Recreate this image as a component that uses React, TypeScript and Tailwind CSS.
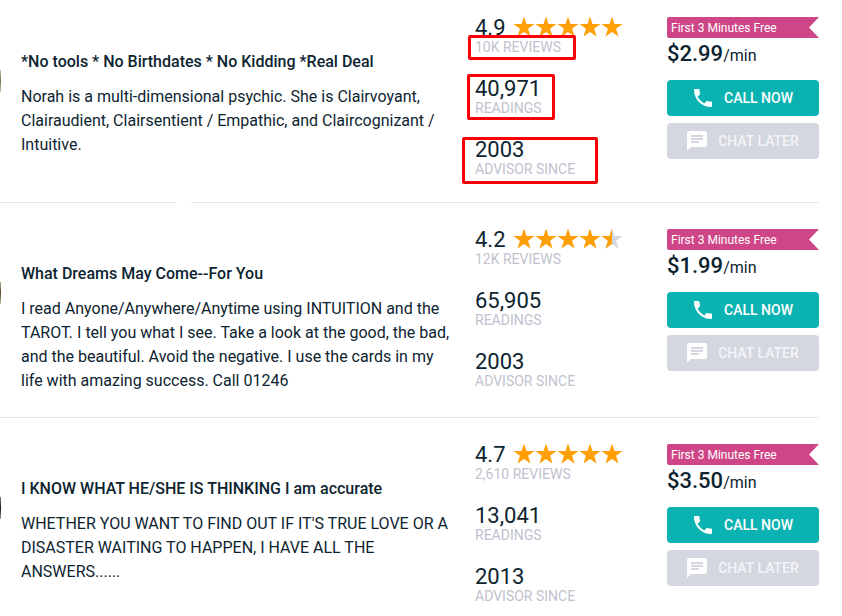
import { clsx } from "clsx";
import { MdChat } from "react-icons/md";

interface Advisor {
  id: number;
  title: string;
  bio: string;
  rating: string;
  stars: number;
  reviews: string;
  readings: string;
  since: string;
  price: string;
  avatar: string;
  marked?: boolean;
}

const advisors: Advisor[] = [
  {
    id: 1,
    title: "*No tools * No Birthdates * No Kidding *Real Deal",
    bio: "Norah is a multi-dimensional psychic. She is Clairvoyant, Clairaudient, Clairsentient / Empathic, and Claircognizant / Intuitive.",
    rating: "4.9",
    stars: 5,
    reviews: "10K REVIEWS",
    readings: "40,971",
    since: "2003",
    price: "$2.99",
    avatar: "from-[#c4c9a8] via-[#6d7a45] to-[#c4c9a8]",
    marked: true,
  },
  {
    id: 2,
    title: "What Dreams May Come--For You",
    bio: "I read Anyone/Anywhere/Anytime using INTUITION and the TAROT. I tell you what I see. Take a look at the good, the bad, and the beautiful. Avoid the negative. I use the cards in my life with amazing success. Call 01246",
    rating: "4.2",
    stars: 4.5,
    reviews: "12K REVIEWS",
    readings: "65,905",
    since: "2003",
    price: "$1.99",
    avatar: "from-[#b9aa92] via-[#5a4636] to-[#c9c4a8]",
  },
  {
    id: 3,
    title: "I KNOW WHAT HE/SHE IS THINKING I am accurate",
    bio: "WHETHER YOU WANT TO FIND OUT IF IT'S TRUE LOVE OR A DISASTER WAITING TO HAPPEN, I HAVE ALL THE ANSWERS......",
    rating: "4.7",
    stars: 5,
    reviews: "2,610 REVIEWS",
    readings: "13,041",
    since: "2013",
    price: "$3.50",
    avatar: "from-[#8a8080] via-[#1c1418] to-[#a89a94]",
  },
];

const Star = ({ fill }: { fill: number }) => (
  <svg viewBox="0 0 22 22" className="size-[22px]" aria-hidden="true">
    <path
      d="M11 .5 13.5 8H21.5L15.1 12.8 17.5 20.6 11 15.9 4.5 20.6 6.9 12.8.5 8H8.5z"
      fill={fill === 1 ? "#ff9f06" : "#d4d7df"}
    />
    {fill === 0.5 && (
      <path d="M11 .5V15.9L4.5 20.6 6.9 12.8.5 8H8.5z" fill="#ff9f06" />
    )}
  </svg>
);

const Stars = ({ value }: { value: number }) => (
  <div className="flex pb-0.5" role="img" aria-label={`${value} out of 5 stars`}>
    {[0, 1, 2, 3, 4].map((i) => (
      <Star key={i} fill={Math.max(0, Math.min(1, value - i))} />
    ))}
  </div>
);

const PhoneIcon = () => (
  <svg viewBox="0 0 24 24" className="size-6" fill="currentColor" aria-hidden="true">
    <path d="M6.62 10.79c1.44 2.83 3.76 5.14 6.59 6.59l2.2-2.2c.27-.27.67-.36 1.02-.24 1.12.37 2.33.57 3.57.57.55 0 1 .45 1 1V20c0 .55-.45 1-1 1-9.39 0-17-7.61-17-17 0-.55.45-1 1-1h3.5c.55 0 1 .45 1 1 0 1.25.2 2.45.57 3.57.11.35.03.74-.25 1.02l-2.2 2.2z" />
  </svg>
);

interface StatProps {
  value: string;
  label: string;
  stars?: number;
  mark?: string | false;
}

const Stat = ({ value, label, stars, mark }: StatProps) => (
  <div className="relative">
    <div className="flex items-center gap-[7px] text-[22px] leading-[26px]">
      <span>{value}</span>
      {stars !== undefined && <Stars value={stars} />}
    </div>
    <div className="text-sm leading-3 text-[#bfc2ce]">{label}</div>
    {/* highlight box */}
    {mark && (
      <div
        className={clsx("absolute rounded-xs border-3 border-[#fb0007]", mark)}
      />
    )}
  </div>
);

const AdvisorRow = ({ advisor }: { advisor: Advisor }) => (
  <article className="flex py-6">
    {/* avatar edge */}
    <div
      className={clsx("mt-[55px] h-[22px] w-px bg-linear-to-b", advisor.avatar)}
    />

    {/* bio */}
    <div className="flex-1 pt-[35px] pr-5 pl-5">
      <h2 className="font-medium leading-6">{advisor.title}</h2>
      <p className="mt-[11px] leading-6">{advisor.bio}</p>
    </div>

    {/* stats */}
    <div className="flex w-48 shrink-0 flex-col gap-[23px] pb-[3px]">
      <Stat
        value={advisor.rating}
        label={advisor.reviews}
        stars={advisor.stars}
        mark={advisor.marked && "-left-[7px] top-5 h-[25px] w-[108px]"}
      />
      <Stat
        value={advisor.readings}
        label="READINGS"
        mark={advisor.marked && "-left-2 -top-0.5 h-[46px] w-[88px]"}
      />
      <Stat
        value={advisor.since}
        label="ADVISOR SINCE"
        mark={advisor.marked && "-left-[13px] top-0 h-[47px] w-[136px]"}
      />
    </div>

    {/* price and buttons */}
    <div className="w-[152px] shrink-0 pt-0.5">
      <div className="h-[21px] rounded-l-xs bg-[#cf4688] pl-1 text-xs leading-[22px] text-white [clip-path:polygon(0_0,100%_0,calc(100%-10px)_50%,100%_100%,0_100%)]">
        First 3 Minutes Free
      </div>
      <div className="leading-8">
        <span className="text-[22px] font-medium">{advisor.price}</span>
        <span>/min</span>
      </div>
      <button className="mt-2 flex h-9 w-full items-center justify-center gap-[9px] rounded-[4px] bg-[#0ab3b1] pr-0.5 text-sm font-medium text-white">
        <PhoneIcon />
        CALL NOW
      </button>
      <button className="mt-[7px] flex h-9 w-full items-center justify-center gap-[9px] rounded-[4px] bg-[#d4d7df] pr-0.5 text-sm font-medium text-[#f3f4f7]">
        <MdChat className="size-6 text-white" />
        CHAT LATER
      </button>
    </div>
  </article>
);

const App = () => {
  return (
    <main className="-mt-[9px] mr-[23px] bg-white font-['Roboto',sans-serif] text-base text-[#0d2430]">
      {advisors.map((advisor, index) => (
        <section key={advisor.id}>
          {/* divider above every row but the first */}
          {index > 0 && (
            <div className={clsx("flex", index === 1 && "gap-[15px]")}>
              <div className="h-px w-44 bg-[#e8e9eb]" />
              <div className="h-px flex-1 bg-[#e8e9eb]" />
            </div>
          )}
          <AdvisorRow advisor={advisor} />
        </section>
      ))}
    </main>
  );
};

export default App;
